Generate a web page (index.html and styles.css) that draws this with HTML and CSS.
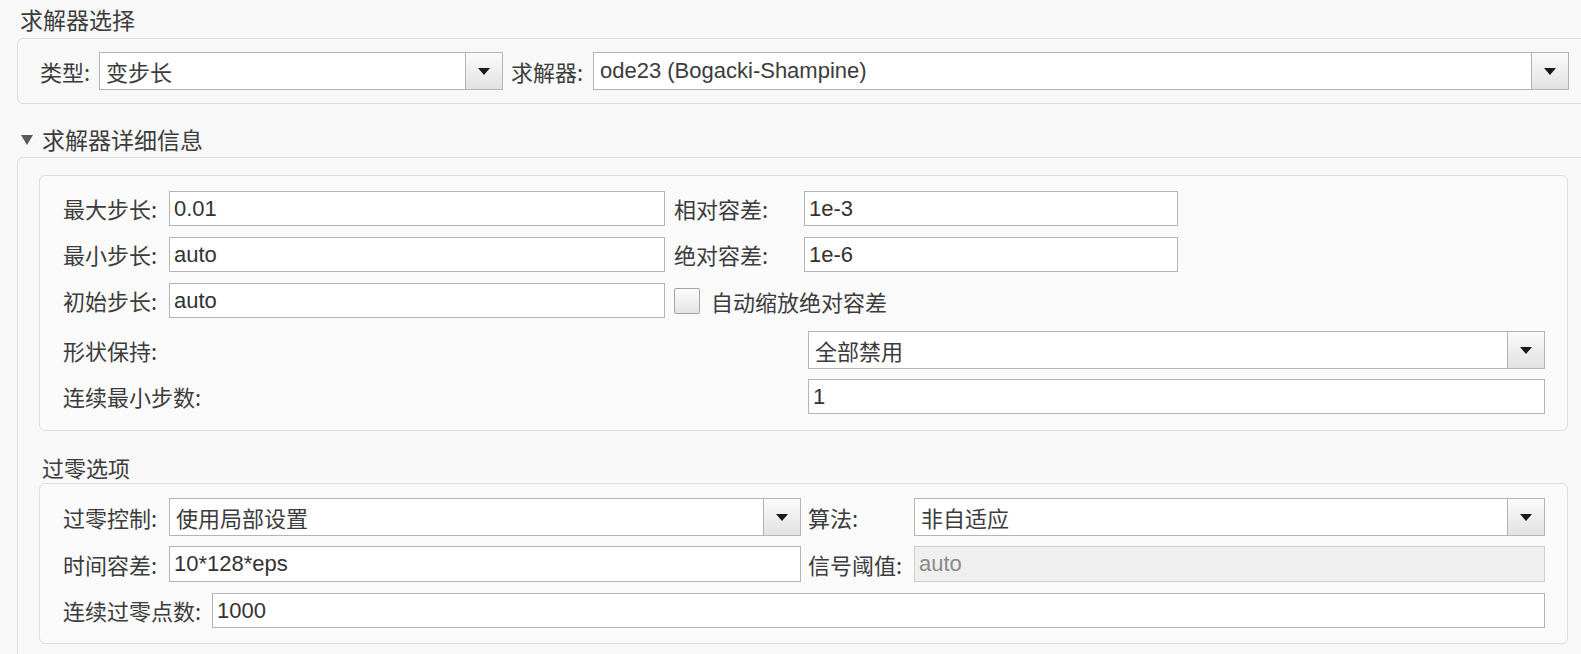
FILE: index.html
```html
<!DOCTYPE html>
<html lang="zh-CN">
<head>
<meta charset="utf-8">
<title>求解器</title>
<link rel="stylesheet" href="styles.css">
</head>
<body>
<div class="page">
  <div class="title">求解器选择</div>
  <div class="panel outer p1">
    <div class="solver-row">
      <span class="label">类型:</span>
      <div class="select"><span class="value">变步长</span><span class="btn"><i class="arrow"></i></span></div>
      <span class="label pl">求解器:</span>
      <div class="select"><span class="value latin">ode23 (Bogacki-Shampine)</span><span class="btn"><i class="arrow"></i></span></div>
    </div>
  </div>

  <div class="title collapse"><span class="tri"></span>求解器详细信息</div>
  <div class="panel outer p2">
    <div class="panel inner pa">
      <div class="grid-a">
        <span class="label">最大步长:</span>
        <div class="field latin">0.01</div>
        <span class="label pl2">相对容差:</span>
        <div class="field latin">1e-3</div>

        <span class="label">最小步长:</span>
        <div class="field latin">auto</div>
        <span class="label pl2">绝对容差:</span>
        <div class="field latin">1e-6</div>

        <span class="label">初始步长:</span>
        <div class="field latin">auto</div>
        <label class="check pl2"><span class="box"></span>自动缩放绝对容差</label>
      </div>
      <div class="grid-b">
        <span class="label">形状保持:</span>
        <div class="select"><span class="value">全部禁用</span><span class="btn"><i class="arrow"></i></span></div>
        <span class="label">连续最小步数:</span>
        <div class="field latin">1</div>
      </div>
    </div>

    <div class="subtitle">过零选项</div>
    <div class="panel inner pb">
      <div class="grid-c">
        <span class="label">过零控制:</span>
        <div class="select"><span class="value">使用局部设置</span><span class="btn"><i class="arrow"></i></span></div>
        <span class="label pl3">算法:</span>
        <div class="select"><span class="value">非自适应</span><span class="btn"><i class="arrow"></i></span></div>

        <span class="label">时间容差:</span>
        <div class="field latin">10*128*eps</div>
        <span class="label pl3">信号阈值:</span>
        <div class="field latin disabled">auto</div>
      </div>
      <div class="grid-d">
        <span class="label">连续过零点数:</span>
        <div class="field latin">1000</div>
      </div>
    </div>
  </div>
</div>
</body>
</html>
```

FILE: styles.css
```css
html, body {
  margin: 0;
  padding: 0;
  background: #f8f8f8;
  overflow: hidden;
}

body {
  font-family: "Noto Sans CJK SC", "Liberation Sans", sans-serif;
  font-size: 22px;
  color: #3c3c3c;
}

.page {
  width: 1573px;
  padding-left: 17px;
}

.latin {
  font-family: "Liberation Sans", "Noto Sans CJK SC", sans-serif;
}

.title {
  height: 38px;
  line-height: 38px;
  padding-left: 3px;
  white-space: nowrap;
  font-size: 23px;
}

.title.collapse {
  margin-top: 17px;
  height: 36px;
  line-height: 36px;
  padding-left: 4px;
  display: flex;
  align-items: center;
}

.tri {
  width: 0;
  height: 0;
  border-left: 6px solid transparent;
  border-right: 6px solid transparent;
  border-top: 10px solid #5a5a5a;
  margin-right: 9px;
  margin-top: 1px;
}

.subtitle {
  height: 32px;
  line-height: 32px;
  margin-top: 20px;
  padding-left: 3px;
}

.panel {
  border: 1px solid #dedede;
  border-radius: 6px;
  box-sizing: border-box;
}

.outer {
  background: #f8f8f8;
}

.inner {
  background: #fafafa;
}

.p1 {
  padding: 13px 20px 13px 22px;
}

.p2 {
  border-bottom: none;
  border-bottom-left-radius: 0;
  border-bottom-right-radius: 0;
  padding: 17px 21px 0 21px;
  height: 520px;
}

.label {
  white-space: nowrap;
  line-height: 35px;
}

.solver-row {
  display: grid;
  grid-template-columns: 59px 404px 90px 1fr;
  align-items: center;
}

.pl { padding-left: 8px; }
.pl2 { padding-left: 9px; }
.pl3 { padding-left: 7px; }

.select {
  height: 38px;
  box-sizing: border-box;
  border: 1px solid #b4b4b4;
  background: #ffffff;
  display: flex;
  align-items: stretch;
}

.select .value {
  flex: 1;
  padding-left: 6px;
  line-height: 36px;
  white-space: nowrap;
  overflow: hidden;
}

.select .btn {
  width: 36px;
  border-left: 1px solid #b4b4b4;
  background: linear-gradient(#fbfbfb, #e2e2e2);
  display: flex;
  align-items: center;
  justify-content: center;
}

.arrow {
  width: 0;
  height: 0;
  border-left: 6px solid transparent;
  border-right: 6px solid transparent;
  border-top: 7px solid #1a1a1a;
}

.field {
  height: 35px;
  box-sizing: border-box;
  border: 1px solid #b4b4b4;
  background: #ffffff;
  padding-left: 4px;
  line-height: 33px;
  white-space: nowrap;
  overflow: hidden;
  color: #333333;
}

.field.disabled {
  background: #efefef;
  border-color: #cdcdcd;
  color: #8a8a8a;
}

.pa {
  padding: 15px 22px 16px 23px;
}

.grid-a {
  display: grid;
  grid-template-columns: 106px 496px 139px 374px;
  grid-auto-rows: 35px;
  row-gap: 11px;
  align-items: center;
}

.check {
  grid-column: 3 / 5;
  display: flex;
  align-items: center;
  white-space: nowrap;
}

.box {
  width: 26px;
  height: 26px;
  box-sizing: border-box;
  border: 1px solid #a3a3a3;
  border-radius: 2px;
  background: linear-gradient(#fdfdfd, #e3e3e3);
  margin-right: 11px;
}

.grid-b {
  margin-top: 13px;
  display: grid;
  grid-template-columns: 745px 1fr;
  row-gap: 10px;
  align-items: center;
}

.pb {
  padding: 14px 22px 15px 23px;
}

.grid-c {
  display: grid;
  grid-template-columns: 106px 632px 113px 1fr;
  row-gap: 10px;
  align-items: center;
}

.grid-c > .field {
  height: 36px;
  line-height: 34px;
}

.grid-d {
  margin-top: 11px;
  display: grid;
  grid-template-columns: 149px 1fr;
  align-items: center;
}
```
